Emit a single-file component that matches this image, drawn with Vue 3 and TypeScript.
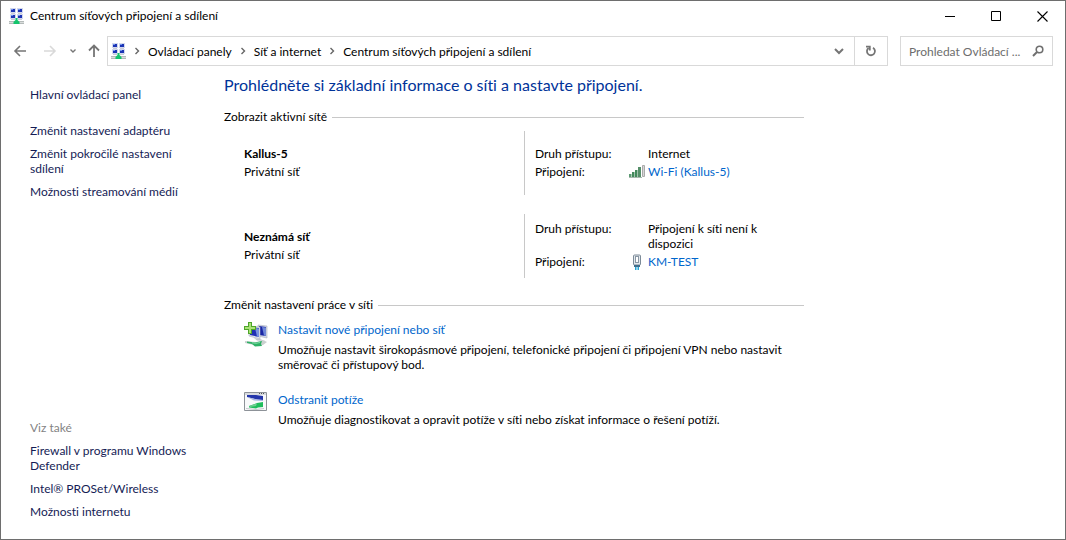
<script setup lang="ts">
interface Access {
  name: string
  category: string
  access: string
  connection: string
  kind: 'wifi' | 'ethernet'
}

const crumbs: string[] = ['Ovládací panely', 'Síť a internet', 'Centrum síťových připojení a sdílení']
const homeLink = 'Hlavní ovládací panel'
const sideLinks: string[] = ['Změnit nastavení adaptéru', 'Změnit pokročilé nastavení sdílení', 'Možnosti streamování médií']
const seeAlso: string[] = ['Firewall v programu Windows Defender', 'Intel® PROSet/Wireless', 'Možnosti internetu']

const networks: Access[] = [
  { name: 'Kallus-5', category: 'Privátní síť', access: 'Internet', connection: 'Wi-Fi (Kallus-5)', kind: 'wifi' },
  { name: 'Neznámá síť', category: 'Privátní síť', access: 'Připojení k síti není k dispozici', connection: 'KM-TEST', kind: 'ethernet' },
]

const tasks = [
  {
    id: 'new',
    title: 'Nastavit nové připojení nebo síť',
    text: 'Umožňuje nastavit širokopásmové připojení, telefonické připojení či připojení VPN nebo nastavit směrovač či přístupový bod.',
  },
  {
    id: 'fix',
    title: 'Odstranit potíže',
    text: 'Umožňuje diagnostikovat a opravit potíže v síti nebo získat informace o řešení potíží.',
  },
]
</script>

<template>
  <div class="window">
    <svg class="defs" width="0" height="0" aria-hidden="true">
      <symbol id="network" viewBox="0 0 16 16">
        <g v-for="y in [0, 6]" :key="y">
          <g v-for="x in [2, 9]" :key="x">
            <path :d="`M${x} ${y}h6v5h-6z`" fill="#d3d8ec" />
            <path :d="`M${x + 1} ${y + 1}h4v3h-4z`" fill="#1c34b4" />
            <path :d="`M${x + 1} ${y + 1}h2v1h-2z`" fill="#6f92ee" />
            <path :d="`M${x + 1} ${y + 5}h4v1h-4z`" fill="#c9cbd8" />
          </g>
        </g>
        <path d="M1 13h15v3H1z" fill="#b4bab9" />
        <path d="M1 14h15v1H1z" fill="#d9dddc" />
        <path d="M7.500 10h2v2l2 2v2h-6v-2l2-2z" fill="#14c46c" />
      </symbol>
    </svg>

    <header class="titlebar">
      <svg width="16" height="16"><use href="#network" /></svg>
      <span class="caption">Centrum síťových připojení a sdílení</span>
      <button class="sys" aria-label="Minimalizovat">
        <svg width="11" height="11"><path d="M0 5.5h10" stroke="#000" /></svg>
      </button>
      <button class="sys" aria-label="Maximalizovat">
        <svg width="11" height="11"><path d="M.5.5h9v9h-9z" fill="none" stroke="#000" /></svg>
      </button>
      <button class="sys" aria-label="Zavřít">
        <svg width="11" height="11"><path d="M.5.5l10 10M10.500.5l-10 10" stroke="#000" stroke-width="1.1" /></svg>
      </button>
    </header>

    <nav class="toolbar">
      <button class="nav" aria-label="Zpět">
        <svg width="14" height="12"><path d="M7 1L2 6l5 5M2 6h11" fill="none" stroke="#757575" stroke-width="1.6" /></svg>
      </button>
      <button class="nav" aria-label="Vpřed" disabled>
        <svg width="14" height="12"><path d="M7 1l5 5-5 5M12 6H1" fill="none" stroke="#d9d9d9" stroke-width="1.6" /></svg>
      </button>
      <button class="nav recent" aria-label="Poslední umístění">
        <svg width="8" height="6"><path d="M1.500 1.500L4 4l2.500-2.500" fill="none" stroke="#777" stroke-width="1.4" /></svg>
      </button>
      <button class="nav up" aria-label="Nahoru">
        <svg width="12" height="14"><path d="M1 6.500l5-5 5 5M6 1.500V13" fill="none" stroke="#757575" stroke-width="1.8" /></svg>
      </button>
      <div class="address">
        <svg class="crumb-icon" width="16" height="16"><use href="#network" /></svg>
        <template v-for="c in crumbs" :key="c">
          <svg class="sep" width="6" height="8"><path d="M1.500 1l3 3-3 3" fill="none" stroke="#666" stroke-width="1.4" /></svg>
          <button class="crumb">{{ c }}</button>
        </template>
        <button class="drop" aria-label="Předchozí umístění">
          <svg width="10" height="8"><path d="M1 2l4 4 4-4" fill="none" stroke="#757575" stroke-width="2" /></svg>
        </button>
        <button class="refresh" aria-label="Aktualizovat">
          <svg width="12" height="12">
            <path d="M8 2.800A4 4 0 1 1 3.600 3" fill="none" stroke="#757575" stroke-width="1.800" />
            <path d="M1 1.600h3.800v3.800" fill="none" stroke="#757575" stroke-width="1.800" />
          </svg>
        </button>
      </div>
      <label class="search">
        <input type="text" aria-label="Prohledat Ovládací panely" placeholder="Prohledat Ovládací ..." />
        <svg width="12" height="12"><circle cx="7.500" cy="4.500" r="3.300" fill="none" stroke="#6f6f6f" stroke-width="1.600" /><path d="M5 7L1 11" stroke="#6f6f6f" stroke-width="2" /></svg>
      </label>
    </nav>

    <div class="body">
      <aside class="side">
        <a class="home" href="#">{{ homeLink }}</a>
        <a v-for="l in sideLinks" :key="l" href="#">{{ l }}</a>
        <h2 class="also">Viz také</h2>
        <a v-for="l in seeAlso" :key="l" href="#">{{ l }}</a>
      </aside>

      <main class="main">
        <h1>Prohlédněte si základní informace o síti a nastavte připojení.</h1>

        <h2 class="section">Zobrazit aktivní sítě</h2>
        <section v-for="n in networks" :key="n.name" class="network">
          <div class="who">
            <strong>{{ n.name }}</strong>
            <span>{{ n.category }}</span>
          </div>
          <dl class="facts">
            <dt>Druh přístupu:</dt>
            <dd>{{ n.access }}</dd>
            <dt>Připojení:</dt>
            <dd class="conn">
              <svg v-if="n.kind === 'wifi'" width="16" height="14">
                <path d="M0 10h2.500v3H0z" fill="#5d9b73" />
                <path d="M3 8h2.500v5H3z" fill="#438a5c" />
                <path d="M6 6h2.500v7H6z" fill="#438a5c" />
                <path d="M9 3h3v10H9z" fill="#568f69" />
                <path d="M13.500 1.500h2v11h-2z" fill="#d6d6d6" stroke="#aaa" />
                <path d="M0 13h13v1H0z" fill="#a8b8ae" />
              </svg>
              <svg v-else width="16" height="16">
                <rect x="4.500" y="1" width="7" height="10" rx="1" fill="#e4e9ed" stroke="#7c8b98" />
                <rect x="6.500" y="2.500" width="3" height="6" fill="#fff" stroke="#8997a4" />
                <path d="M5 11h6v2H5z" fill="#416f8c" />
                <path d="M6 13h1.500v3H6zM8.500 13H10v3H8.500z" fill="#27a5d5" />
              </svg>
              <a href="#">{{ n.connection }}</a>
            </dd>
          </dl>
        </section>

        <h2 class="section change">Změnit nastavení práce v síti</h2>
        <section v-for="t in tasks" :key="t.id" class="task">
          <svg v-if="t.id === 'new'" width="24" height="26">
            <path d="M14 3l9 1v12l-9-2z" fill="#d4d9e4" stroke="#a9b0c0" stroke-width=".6" />
            <path d="M15 4l7 1v9l-7-1z" fill="#1926a5" />
            <path d="M18 5l4 .5V14l-2-.4z" fill="#7088d8" />
            <path d="M5 4l11 1v12L5 14z" fill="#dfe3eb" stroke="#a9b0c0" stroke-width=".6" />
            <path d="M6 5l9 1v9L6 13z" fill="#2030b4" />
            <path d="M11 6l4 .5V15l-2-.5z" fill="#7891df" />
            <path d="M10 16l6 1 5 2-8-.5z" fill="#bfc4cc" />
            <path d="M1 19l11 1 8-1.500 3 1.500-4 3-5 1-13-3z" fill="#cbd0cf" />
            <path d="M3 19.500l8 1 7-1.500-1 3 1 2-7 .5-3-2.500-5-1z" fill="#2fb166" />
            <path d="M8 20.800l4 .5 4-.8" fill="none" stroke="#7fdca5" />
            <path d="M4 0h4v4h4v4H8v4H4V8H0V4h4z" fill="#4fa52b" />
            <path d="M5 1h2v4h4v2H7v4H5V7H1V5h4z" fill="#a9e276" />
          </svg>
          <svg v-else width="24" height="20">
            <path d="M.5.500h22v18H.5z" fill="#f8f9fa" stroke="#8d9298" />
            <path d="M1 1h21v2H1z" fill="#d7dade" />
            <path d="M15 1.500h1M17 1.500h1M19 1.500h1" stroke="#555" />
            <path d="M3 3h9l7 1v4l-6-.5L3 5z" fill="#2335ab" />
            <path d="M3 5l10 2.500 6 .5v1l-9-.5z" fill="#a9b4e0" />
            <path d="M5 14l8-3 6-1v5l-5 .5-2 1-7-1z" fill="#1fbd5c" />
            <path d="M5 14l8-2.500-1 2.500-6 1z" fill="#70ce91" />
            <path d="M2 16l10 1 8-1v1l-8 1-10-1z" fill="#c3c8cb" />
          </svg>
          <div class="info">
            <a href="#">{{ t.title }}</a>
            <p>{{ t.text }}</p>
          </div>
        </section>
      </main>
    </div>
  </div>
</template>

<style>
body {
  margin: 0;
}
</style>

<style scoped>
* {
  box-sizing: border-box;
}

.window {
  display: flex;
  flex-direction: column;
  min-height: 100vh;
  border: 1px solid #6e6e6e;
  background: #fff;
  color: #000;
  font: 12px/15px "Segoe UI", Lato, "Open Sans", sans-serif;
  font-variant-ligatures: none;
}

.defs {
  position: absolute;
}

svg {
  display: block;
  flex: none;
}

button {
  display: flex;
  align-items: center;
  justify-content: center;
  padding: 0;
  border: 0;
  background: none;
  color: inherit;
  font: inherit;
}

a {
  color: #0066cc;
  text-decoration: none;
}

h1,
h2,
p,
dl,
dd {
  margin: 0;
  font-weight: 400;
  font-size: 12px;
}

.titlebar {
  display: flex;
  align-items: center;
  height: 30px;
  padding-left: 7px;
}

.caption {
  flex: 1;
  padding: 0 0 2px 6px;
}

.sys {
  width: 46px;
  height: 30px;
}

.toolbar {
  display: flex;
  align-items: center;
  height: 40px;
  padding: 0 12px 0 4px;
}

.nav {
  width: 30px;
  height: 30px;
}

.recent {
  width: 16px;
}

.up {
  width: 26px;
}

.address {
  display: flex;
  flex: 1;
  align-items: center;
  height: 30px;
  border: 1px solid #d9d9d9;
}

.crumb-icon {
  margin: 0 8px 0 2px;
}

.sep {
  margin-right: 8px;
}

.crumb {
  margin-right: 8px;
  white-space: nowrap;
}

.drop {
  width: 30px;
  height: 28px;
  margin-left: auto;
}

.refresh {
  width: 33px;
  height: 28px;
  border-left: 1px solid #d9d9d9;
}

.search {
  display: flex;
  align-items: center;
  width: 153px;
  height: 30px;
  margin-left: 12px;
  padding: 0 8px;
  border: 1px solid #d9d9d9;
}

.search input {
  flex: 1;
  min-width: 0;
  padding: 0;
  border: 0;
  outline: 0;
  background: none;
  font: inherit;
}

.search input::placeholder {
  color: #6d6d6d;
  opacity: 1;
}

.body {
  display: flex;
  flex: 1;
}

.side {
  display: flex;
  flex-direction: column;
  gap: 8px;
  width: 223px;
  padding: 16px 29px 20px;
}

.side a {
  color: #151c55;
}

.side .home {
  margin-bottom: 13px;
}

.also {
  margin-top: auto;
  color: #838383;
}

.main {
  flex: 1;
  max-width: 580px;
  padding-top: 3px;
}

h1 {
  color: #003399;
  font-size: 16px;
  line-height: 22px;
}

.section {
  display: flex;
  align-items: center;
  gap: 5px;
  margin: 13px 0 7px;
}

.section::after {
  flex: 1;
  height: 1px;
  margin-top: 2px;
  background: #c8c8c8;
  content: "";
}

.network {
  display: flex;
  min-height: 64px;
  margin: 0 0 19px 20px;
}

.who {
  display: flex;
  flex: 1;
  flex-direction: column;
  justify-content: center;
  gap: 3px;
  padding-bottom: 2px;
}

.facts {
  display: grid;
  grid-template-columns: 113px 1fr;
  row-gap: 3px;
  align-content: center;
  width: 280px;
  padding: 0 30px 2px 10px;
  border-left: 1px solid #c8c8c8;
}

.conn {
  display: flex;
  align-items: center;
  gap: 3px;
  margin-left: -19px;
}

.change {
  margin: 19px 0 10px;
}

.task {
  display: flex;
  gap: 10px;
  margin: 0 0 20px 20px;
}

.info {
  display: grid;
  gap: 5px;
}
</style>
